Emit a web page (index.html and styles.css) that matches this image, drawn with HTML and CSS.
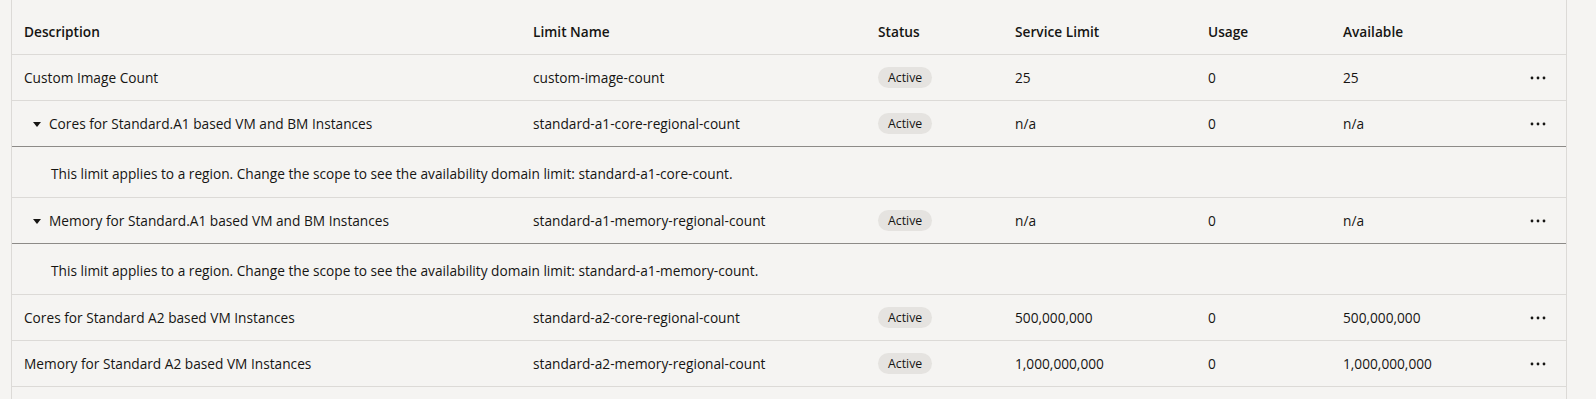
FILE: index.html
```html
<!DOCTYPE html>
<html lang="en">
<head>
<meta charset="utf-8">
<title>Limits</title>
<link rel="stylesheet" href="styles.css">
</head>
<body>
<div class="page">
  <table class="limits">
    <colgroup>
      <col class="c-desc"><col class="c-name"><col class="c-status"><col class="c-limit"><col class="c-usage"><col class="c-avail"><col class="c-act">
    </colgroup>
    <thead>
      <tr>
        <th>Description</th>
        <th>Limit Name</th>
        <th>Status</th>
        <th>Service Limit</th>
        <th>Usage</th>
        <th>Available</th>
        <th></th>
      </tr>
    </thead>
    <tbody>
      <tr class="row">
        <td>Custom Image Count</td>
        <td>custom-image-count</td>
        <td><span class="badge">Active</span></td>
        <td>25</td>
        <td>0</td>
        <td>25</td>
        <td class="act"><svg class="dots" width="16" height="4" viewBox="0 0 16 4"><circle cx="2" cy="2" r="1.4"/><circle cx="8" cy="2" r="1.4"/><circle cx="14" cy="2" r="1.4"/></svg></td>
      </tr>
      <tr class="row expanded">
        <td><span class="caret"></span>Cores for Standard.A1 based VM and BM Instances</td>
        <td>standard-a1-core-regional-count</td>
        <td><span class="badge">Active</span></td>
        <td>n/a</td>
        <td>0</td>
        <td>n/a</td>
        <td class="act"><svg class="dots" width="16" height="4" viewBox="0 0 16 4"><circle cx="2" cy="2" r="1.4"/><circle cx="8" cy="2" r="1.4"/><circle cx="14" cy="2" r="1.4"/></svg></td>
      </tr>
      <tr class="detail">
        <td colspan="7">This limit applies to a region. Change the scope to see the availability domain limit: standard-a1-core-count.</td>
      </tr>
      <tr class="row expanded">
        <td><span class="caret"></span>Memory for Standard.A1 based VM and BM Instances</td>
        <td>standard-a1-memory-regional-count</td>
        <td><span class="badge">Active</span></td>
        <td>n/a</td>
        <td>0</td>
        <td>n/a</td>
        <td class="act"><svg class="dots" width="16" height="4" viewBox="0 0 16 4"><circle cx="2" cy="2" r="1.4"/><circle cx="8" cy="2" r="1.4"/><circle cx="14" cy="2" r="1.4"/></svg></td>
      </tr>
      <tr class="detail">
        <td colspan="7">This limit applies to a region. Change the scope to see the availability domain limit: standard-a1-memory-count.</td>
      </tr>
      <tr class="row">
        <td>Cores for Standard A2 based VM Instances</td>
        <td>standard-a2-core-regional-count</td>
        <td><span class="badge">Active</span></td>
        <td>500,000,000</td>
        <td>0</td>
        <td>500,000,000</td>
        <td class="act"><svg class="dots" width="16" height="4" viewBox="0 0 16 4"><circle cx="2" cy="2" r="1.4"/><circle cx="8" cy="2" r="1.4"/><circle cx="14" cy="2" r="1.4"/></svg></td>
      </tr>
      <tr class="row">
        <td>Memory for Standard A2 based VM Instances</td>
        <td>standard-a2-memory-regional-count</td>
        <td><span class="badge">Active</span></td>
        <td>1,000,000,000</td>
        <td>0</td>
        <td>1,000,000,000</td>
        <td class="act"><svg class="dots" width="16" height="4" viewBox="0 0 16 4"><circle cx="2" cy="2" r="1.4"/><circle cx="8" cy="2" r="1.4"/><circle cx="14" cy="2" r="1.4"/></svg></td>
      </tr>
    </tbody>
  </table>
</div>
</body>
</html>
```
FILE: styles.css
```css
html, body {
  margin: 0;
  padding: 0;
  background: #f5f4f2;
}
body {
  font-family: "Open Sans", "Noto Sans", sans-serif;
  font-size: 13.7px;
  color: #161513;
  height: 399px;
  overflow: hidden;
  padding-left: 11px;
}
.page {
  width: 1554px;
  height: 399px;
  border-left: 1px solid #dcdad7;
  border-right: 1px solid #dcdad7;
}
.limits {
  width: 1554px;
  table-layout: fixed;
  border-collapse: collapse;
}
.c-desc { width: 509px; }
.c-name { width: 345px; }
.c-status { width: 137px; }
.c-limit { width: 193px; }
.c-usage { width: 135px; }
.c-avail { width: 168px; }
.c-act { width: 67px; }

th {
  text-align: left;
  font-weight: 600;
  line-height: 20px;
  padding: 22px 12px 12px;
  height: 20px;
  border-bottom: 1px solid #dcdad7;
  white-space: nowrap;
}
td {
  line-height: 20px;
  padding: 0 12px;
  height: 45px;
  vertical-align: middle;
  white-space: nowrap;
  border-bottom: 1px solid #dcdad7;
}
.expanded td { border-bottom-color: #8d8b88; }
.expanded td:first-child { padding-left: 21px; }
.caret {
  display: inline-block;
  width: 0;
  height: 0;
  border-left: 4.5px solid transparent;
  border-right: 4.5px solid transparent;
  border-top: 5px solid #161513;
  margin-right: 8px;
  vertical-align: 2px;
}
.detail td {
  height: 46px;
  padding: 4px 12px 0 39px;
}
.badge {
  display: inline-block;
  background: #e5e3e0;
  border-radius: 11px;
  font-size: 12.3px;
  line-height: 21px;
  height: 21px;
  padding: 0 10px;
  color: #161513;
}
.act { padding-left: 31px; }
.dots { display: block; fill: #161513; }
```
